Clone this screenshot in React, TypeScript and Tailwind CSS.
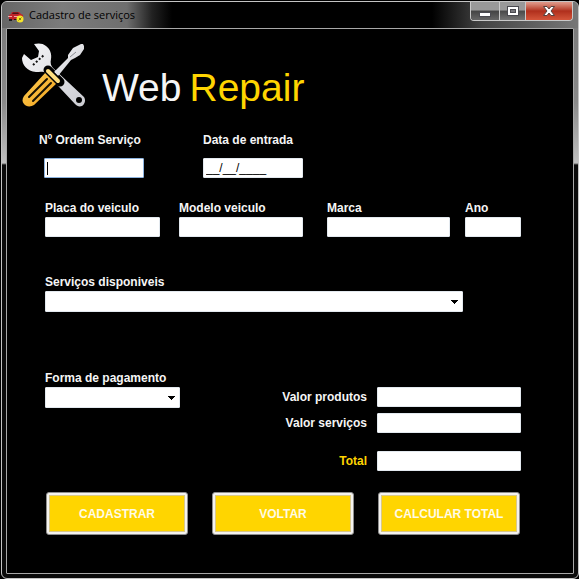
import type { ReactNode } from "react";

const fieldBox =
  "h-5 w-full rounded-[1px] border border-[#e3e9ef] bg-white px-[2px] text-[12px] leading-4 text-black outline-none";
const labelText = "block text-[12px] font-bold leading-4 whitespace-nowrap";

function Field({ id, label, className = "" }: { id: string; label: string; className?: string }) {
  return (
    <div className={className}>
      <label htmlFor={id} className={labelText}>{label}</label>
      <input id={id} type="text" className={`${fieldBox} mt-px block`} />
    </div>
  );
}

function SelectField({ id, label, className = "" }: { id: string; label: string; className?: string }) {
  return (
    <div className={className}>
      <label htmlFor={id} className={labelText}>{label}</label>
      <div className="relative mt-px">
        <select
          id={id}
          className="block h-[21px] w-full appearance-none rounded-[1px] border border-[#e3e9ef] bg-white text-[12px] text-black outline-none"
        />
        <svg viewBox="0 0 7 4" className="pointer-events-none absolute top-[9px] right-[5px] h-1 w-[7px] fill-black" shapeRendering="crispEdges" aria-hidden="true">
          <path d="M0 0h7v1h-1v1h-1v1h-1v1h-1v-1h-1v-1h-1v-1h-1z" />
        </svg>
      </div>
    </div>
  );
}

function AmountRow({ id, label, className = "" }: { id: string; label: string; className?: string }) {
  return (
    <div className={`flex items-center gap-[10px] ${className}`}>
      <label htmlFor={id} className={`${labelText} flex-1 text-right`}>{label}</label>
      <input id={id} type="text" className={`${fieldBox} max-w-36`} />
    </div>
  );
}

function ActionButton({ children }: { children: ReactNode }) {
  return (
    <button
      type="button"
      className="h-[43px] rounded-[3px] border border-[#8f8f8f] bg-[#f4f2ee] p-[2px] text-[12px] text-[#fffbe6]"
    >
      <span className="flex h-full items-center justify-center border border-[#d8c88a] bg-[#ffd500] font-bold whitespace-nowrap">
        {children}
      </span>
    </button>
  );
}

function CarIcon() {
  return (
    <svg viewBox="0 0 16 12" className="mt-1 h-3 w-4" aria-hidden="true">
      <path d="M1 4l2-1 1-2h7l2 2 2 1v5H1z" fill="#c0242b" />
      <path d="M4 3l1-1.500h5l1 1.500z" fill="#4a1416" />
      <path d="M0 5h4v1H0zM6 5h4v1H6z" fill="#f0a8a8" />
      <path d="M1 8h3v2H1zM6 8h4v1H6z" fill="#1c1c1c" />
      <circle cx="12" cy="8" r="3.500" fill="#f6e52b" />
      <path d="M10.500 9.500l3-3M11 7l2 2" stroke="#85770f" strokeWidth="1" />
    </svg>
  );
}

function ToolsLogo() {
  return (
    <svg viewBox="0 0 64 64" className="h-16 w-16 shrink-0" aria-hidden="true">
      <defs>
        <linearGradient id="steel" x1="0" y1="0" x2="1" y2="1">
          <stop offset="0" stopColor="#f6f6f8" />
          <stop offset="1" stopColor="#cbccd2" />
        </linearGradient>
        <linearGradient id="grip" x1="0" y1="0" x2="1" y2="1">
          <stop offset="0" stopColor="#ffd45c" />
          <stop offset="1" stopColor="#f09c14" />
        </linearGradient>
      </defs>
      <path
        d="M12 1C16 0 21 0 24 3C28 6 30 11 29 16C28 20 29 23 31 25L62 54C64 57 63 61 60 63C57 64 55 63 53 61L24 30C21 28 17 29 14 29C5 28 0 22 0 15L2 11L9 17L16 14L17 8Z"
        fill="url(#steel)"
      />
      <path d="M11 22L22 12" stroke="#111" strokeWidth="2" strokeDasharray="2 2" />
      <circle cx="57" cy="57" r="3" fill="#000" />
      <path d="M26 27L38 39" stroke="#000" strokeWidth="9" strokeLinecap="round" />
      <path
        d="M59 1H61L62 3V6L58 12L53 15L49 17L36 33L32 29L46 15V12L51 5Z"
        fill="url(#steel)"
      />
      <path d="M54 9L48 14" stroke="#8b8c92" strokeWidth="1" />
      <path d="M24 29L35 40L12 62C9 64 4 64 2 61C0 59 0 56 2 53Z" fill="url(#grip)" />
      <path d="M25 36L7 54M29 40L11 58" stroke="#171103" strokeWidth="2" strokeLinecap="round" />
      <path d="M26 28L36 38" stroke="#000" strokeWidth="7" strokeLinecap="round" />
      <path d="M26 28L36 38" stroke="#ffdf80" strokeWidth="4" strokeLinecap="round" />
    </svg>
  );
}

function TitleBar() {
  return (
    <header className="relative flex h-[26px] items-center pl-[2px]">
      <CarIcon />
      <h1 className="relative ml-[5px] text-[11px] leading-4 text-black font-['Open_Sans','Noto_Sans',sans-serif]">
        Cadastro de serviços
      </h1>
      <div className="absolute top-0 right-px flex h-[19px] overflow-hidden rounded-b-[4px] border border-t-0 border-[#c9c9c9]">
        <button type="button" aria-label="Minimizar" className="flex w-7 items-center justify-center bg-linear-to-b from-[#999] from-45% via-[#444] via-50% to-[#666]">
          <svg viewBox="0 0 12 5" className="mt-[6px] h-[5px] w-3" aria-hidden="true">
            <rect x="0.500" y="0.500" width="11" height="4" fill="#fff" stroke="#4a4a50" />
          </svg>
        </button>
        <button type="button" aria-label="Maximizar" className="flex w-[27px] items-center justify-center border-x border-[#c9c9c9] bg-linear-to-b from-[#999] from-45% via-[#4a4a4a] via-50% to-[#747474]">
          <svg viewBox="0 0 12 10" className="h-[10px] w-3" aria-hidden="true">
            <rect x="0.500" y="0.500" width="11" height="9" fill="#fff" stroke="#4a4a50" />
            <rect x="3.500" y="3.500" width="5" height="3" fill="#77777c" stroke="#4a4a50" />
          </svg>
        </button>
        <button type="button" aria-label="Fechar" className="flex w-[46px] items-center justify-center bg-linear-to-b from-[#dc9484] from-5% via-[#b02f1c] via-50% to-[#d4553a]">
          <svg viewBox="0 0 12 10" className="h-[10px] w-3" aria-hidden="true">
            <path d="M0.500 0.500h3.500l2 2.500 2-2.500h3.500L8 5l3.500 4.500H8L6 7 4 9.500H0.500L4 5z" fill="#fff" stroke="#55423f" />
          </svg>
        </button>
      </div>
    </header>
  );
}

export default function App() {
  return (
    <div className="flex min-h-screen flex-col bg-black pt-px pl-px font-['Liberation_Sans',Arial,sans-serif]">
      <div className="relative flex flex-1 flex-col overflow-hidden rounded-[6px] border border-[#c4c4c4] px-1 pb-1 bg-[linear-gradient(#777,#8a8a8a_100px,#c0c0c0_161px,#0a0a0a_163px)]">
        <div className="absolute inset-x-0 top-0 h-[26px] bg-[linear-gradient(90deg,#666,#7c7c7c_60px,#6e6e6e_125px,#222_150px,#000_170px,#000_430px,#444_480px,#777)]" />
        <TitleBar />
        <main className="flex flex-1 flex-col rounded-[1px] border border-[#a8a8a8] bg-black text-[#f5f5f5]">
          <div className="flex items-start gap-4 pt-[14px] pl-[15px]">
            <ToolsLogo />
            <h2 className="flex gap-2 pt-[22px] text-[39px] leading-[46px]">
              <span>Web</span>
              <span className="text-[#ffd500]">Repair</span>
            </h2>
          </div>

          <form className="flex flex-col pr-[52px] pb-9 pl-[38px]">
            <div className="-ml-[6px] mt-[21px] grid grid-cols-[164fr_318fr]">
              <div>
                <label htmlFor="ordem" className={labelText}>Nº Ordem Serviço</label>
                <div className="relative mt-[10px] ml-[5px] w-[100px]">
                  <input id="ordem" type="text" className="block h-5 w-full rounded-[1px] border border-[#8db4e0] bg-white px-[2px] text-[12px] leading-4 text-black outline-none" />
                  <span className="absolute top-1 left-[3px] h-[13px] w-px bg-black" />
                </div>
              </div>
              <div>
                <label htmlFor="entrada" className={labelText}>Data de entrada</label>
                <input id="entrada" type="text" defaultValue="__/__/____" className={`${fieldBox} mt-[10px] block max-w-[100px]`} />
              </div>
            </div>

            <div className="mt-[22px] grid grid-cols-[134fr_148fr_138fr_56fr]">
              <Field id="placa" label="Placa do veiculo" className="pr-[19px]" />
              <Field id="modelo" label="Modelo veiculo" className="pr-6" />
              <Field id="marca" label="Marca" className="pr-[15px]" />
              <Field id="ano" label="Ano" />
            </div>

            <SelectField id="servicos" label="Serviços disponiveis" className="mt-[37px] pr-[58px]" />

            <div className="mt-[58px] grid grid-cols-[135fr_341fr]">
              <SelectField id="pagamento" label="Forma de pagamento" />
              <div className="pt-[17px]">
                <AmountRow id="produtos" label="Valor produtos" />
                <AmountRow id="valor-servicos" label="Valor serviços" className="mt-[6px]" />
                <AmountRow id="total" label="Total" className="mt-[18px] text-[#ffd500]" />
              </div>
            </div>

            <div className="mx-px mt-[21px] grid grid-cols-3 gap-6">
              <ActionButton>CADASTRAR</ActionButton>
              <ActionButton>VOLTAR</ActionButton>
              <ActionButton>CALCULAR TOTAL</ActionButton>
            </div>
          </form>
        </main>
      </div>
    </div>
  );
}
